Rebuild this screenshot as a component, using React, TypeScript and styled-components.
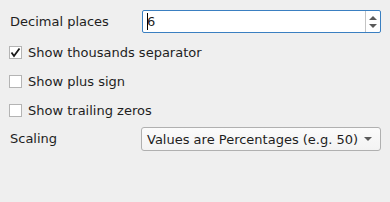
import React, { FC, useState } from "react";
import styled, { createGlobalStyle } from "styled-components";

const GlobalStyle = createGlobalStyle`
    html, body {
        margin: 0;
        padding: 0;
        background: #efefef;
    }
    body {
        font-family: "DejaVu Sans", "Liberation Sans", sans-serif;
        font-size: 13px;
        color: #1e1e1e;
    }
`;

const Dialog = styled.div`
    width: 390px;
    height: 202px;
    box-sizing: border-box;
    padding: 10px 9px 0 10px;
    display: flex;
    flex-direction: column;
`;

const FieldRow = styled.div`
    display: grid;
    grid-template-columns: 132px 1fr;
    align-items: center;
    height: 23px;
`;

const Label = styled.span`
    line-height: 16px;
`;

const SpinBox = styled.div`
    display: flex;
    height: 23px;
    box-sizing: border-box;
    border: 1px solid #3a7fc1;
    border-radius: 2px;
    background: #ffffff;
`;

const SpinInput = styled.div`
    flex: 1;
    display: flex;
    align-items: center;
    padding-left: 3px;
    border-left: 1px solid transparent;
`;

const Caret = styled.span`
    display: inline-block;
    width: 1px;
    height: 17px;
    background: #000;
    margin-right: -1px;
`;

const SpinButtons = styled.div`
    width: 14px;
    border-left: 1px solid #c4c4c4;
    display: flex;
    flex-direction: column;
    align-items: center;
    justify-content: center;
    gap: 4px;
`;

const Arrow = styled.span<{ up?: boolean }>`
    width: 0;
    height: 0;
    border-left: 4px solid transparent;
    border-right: 4px solid transparent;
    ${(p) =>
        p.up
            ? "border-bottom: 4px solid #5a5a5a;"
            : "border-top: 4px solid #5a5a5a;"}
`;

const CheckList = styled.div`
    display: flex;
    flex-direction: column;
    gap: 16px;
    padding: 13px 0 10px 0;
`;

const CheckRow = styled.label`
    display: flex;
    align-items: center;
    gap: 6px;
    height: 13px;
    margin-left: -1px;
`;

const Box = styled.span`
    width: 13px;
    height: 13px;
    box-sizing: border-box;
    border: 1px solid #b4b4b4;
    background: #ffffff;
    display: flex;
    align-items: center;
    justify-content: center;
`;

const ComboBox = styled.div`
    display: flex;
    align-items: center;
    justify-content: space-between;
    height: 24px;
    box-sizing: border-box;
    border: 1px solid #b0b0b0;
    border-radius: 3px;
    background: linear-gradient(#fbfbfb, #f3f3f3);
    padding: 0 8px 0 5px;
    margin-left: -1px;
`;

const Check: FC<{ checked: boolean }> = ({ checked }) => (
    <Box>
        {checked && (
            <svg width="11" height="11" viewBox="0 0 11 11">
                <path
                    d="M1.5 5.5 L4 9 L9.5 1.5"
                    fill="none"
                    stroke="#1a1a1a"
                    strokeWidth="1.8"
                />
            </svg>
        )}
    </Box>
);

const App: FC = () => {
    const [options] = useState([
        { label: "Show thousands separator", checked: true },
        { label: "Show plus sign", checked: false },
        { label: "Show trailing zeros", checked: false },
    ]);
    return (
        <>
            <GlobalStyle />
            <Dialog>
                <FieldRow>
                    <Label>Decimal places</Label>
                    <SpinBox>
                        <SpinInput>
                            <Caret />
                            <span>6</span>
                        </SpinInput>
                        <SpinButtons>
                            <Arrow up />
                            <Arrow />
                        </SpinButtons>
                    </SpinBox>
                </FieldRow>
                <CheckList>
                    {options.map((o) => (
                        <CheckRow key={o.label}>
                            <Check checked={o.checked} />
                            <span>{o.label}</span>
                        </CheckRow>
                    ))}
                </CheckList>
                <FieldRow>
                    <Label>Scaling</Label>
                    <ComboBox>
                        <span>Values are Percentages (e.g. 50)</span>
                        <Arrow />
                    </ComboBox>
                </FieldRow>
            </Dialog>
        </>
    );
};

export default App;
